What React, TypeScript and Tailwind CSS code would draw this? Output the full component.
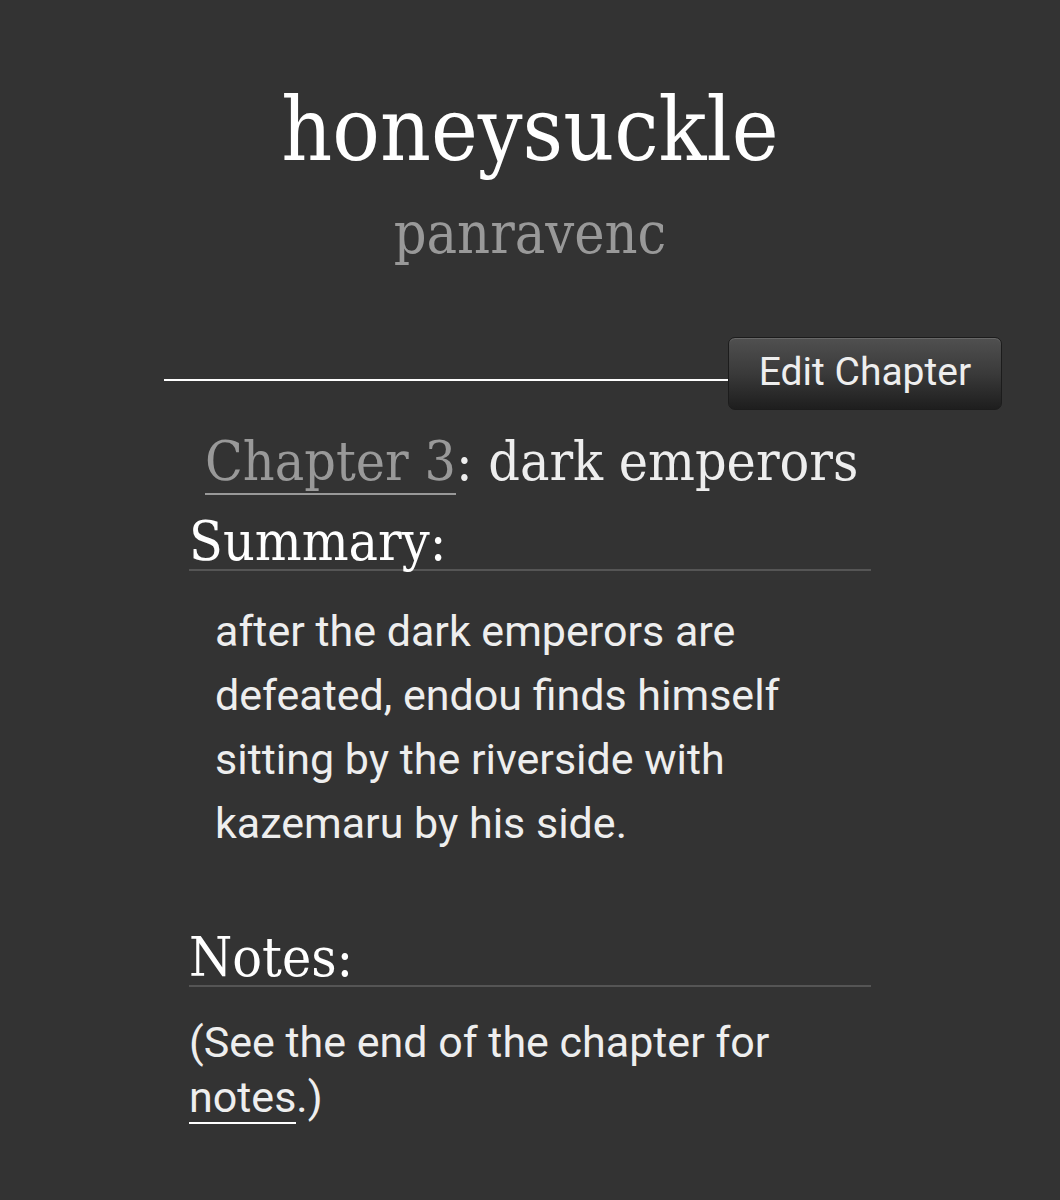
export default function App() {
  const serif = "font-['DejaVu_Serif',serif] [font-stretch:condensed]";
  return (
    <div className="min-h-[1200px] w-full bg-[#333333] text-[#eeeeee] font-['Roboto',sans-serif]">
      <header className="pt-[80px] text-center">
        <h2 className={`${serif} text-[88px] leading-[100px] text-white`}>honeysuckle</h2>
        <h3 className={`${serif} mt-[23px] text-[57px] leading-[60px] text-[#999999]`}>panravenc</h3>
      </header>

      <div className="mt-[74px] ml-[164px] mr-[58px] flex items-center">
        <div className="mt-[13px] h-[2px] flex-1 bg-white" />
        <button className="h-[73px] w-[274px] rounded-[7px] border border-[#1c1c1c] bg-gradient-to-b from-[#505050] via-[#3a3a3a] to-[#1e1e1e] pb-[3px] text-[39px] text-[#eeeeee] shadow-[inset_0_1px_0_rgba(255,255,255,0.14)]">
          Edit Chapter
        </button>
      </div>

      <div className="mx-[189px]">
        <h3 className={`${serif} mt-[19px] pl-[16px] text-[55px] leading-[64px]`}>
          <a className="border-b-2 border-[#999999] text-[#999999]">Chapter 3</a>
          <span className="text-[#eeeeee]">: dark emperors</span>
        </h3>

        <h3 className={`${serif} mt-[20px] border-b-2 border-[#555555] text-[55px] leading-[56px] text-white`}>
          Summary:
        </h3>
        <blockquote className="mt-[28px] pl-[26px] text-[43px] leading-[64px] text-[#eeeeee]">
          after the dark emperors are
          <br />
          defeated, endou finds himself
          <br />
          sitting by the riverside with
          <br />
          kazemaru by his side.
        </blockquote>

        <h3 className={`${serif} mt-[74px] border-b-2 border-[#555555] text-[55px] leading-[56px] text-white`}>
          Notes:
        </h3>
        <p className="mt-[28px] text-[43px] leading-[55px] text-[#eeeeee]">
          (See the end of the chapter for
          <br />
          <a className="border-b-2 border-white">notes</a>.)
        </p>
      </div>
    </div>
  );
}
